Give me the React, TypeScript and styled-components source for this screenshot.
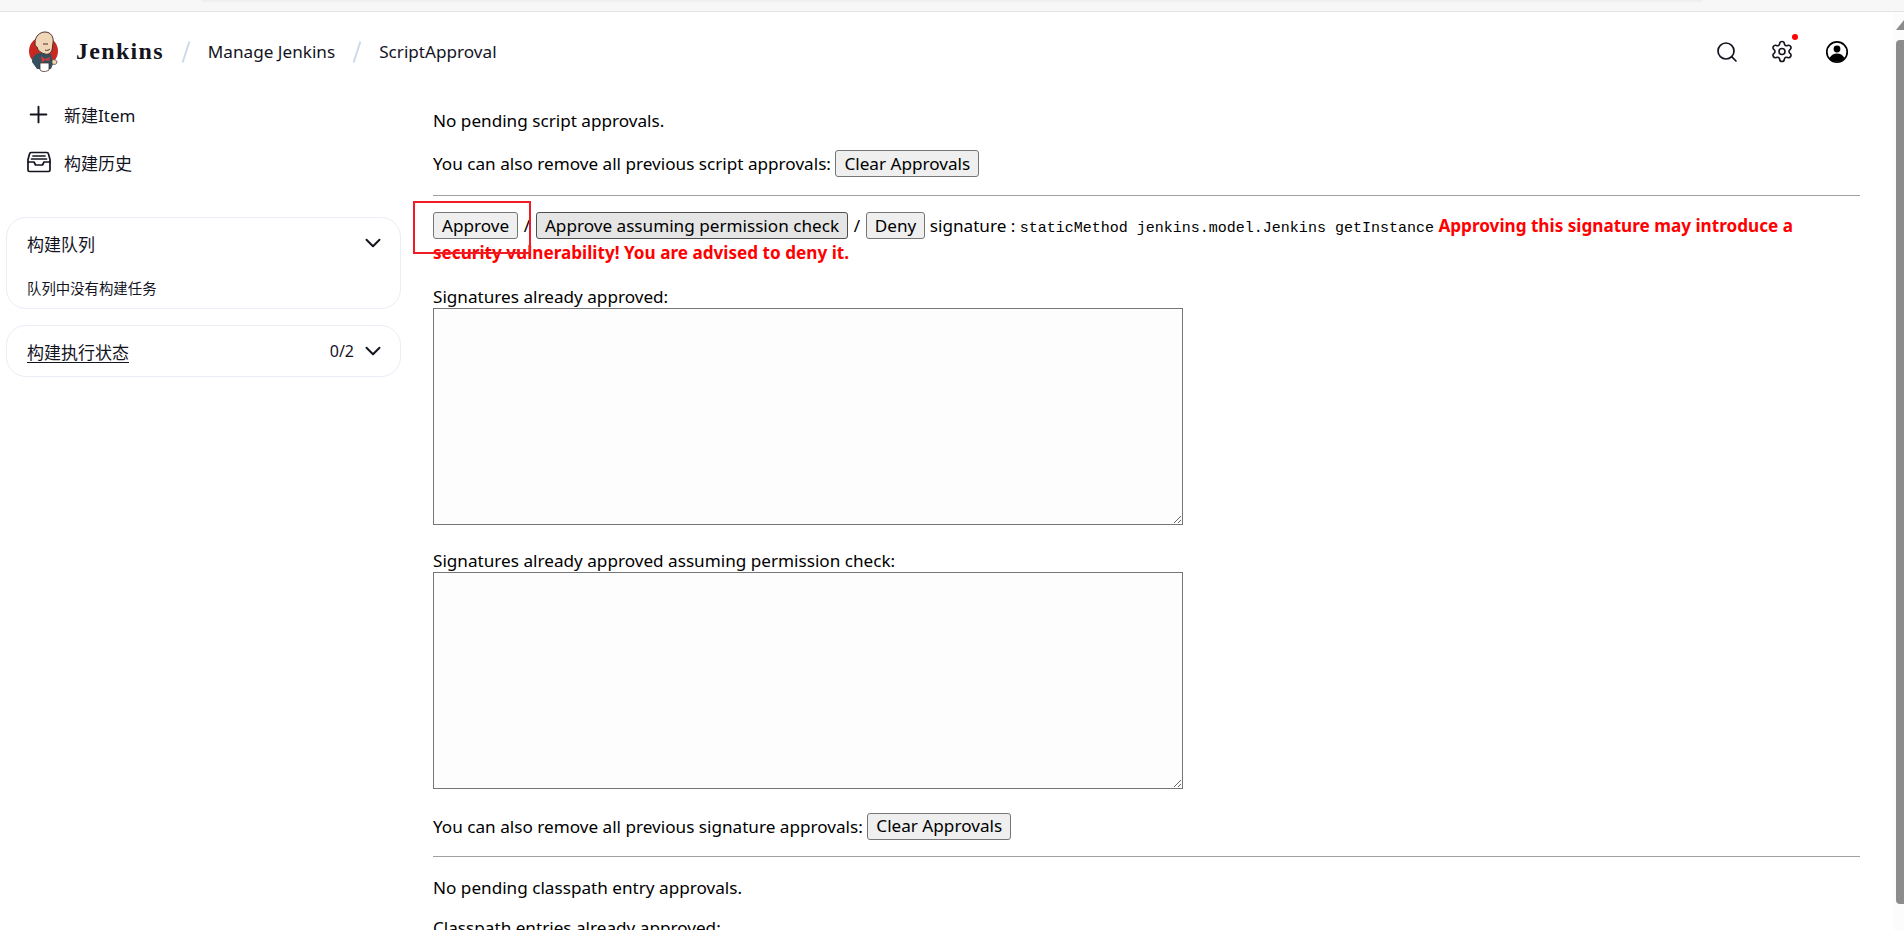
import React from "react"
import styled, { createGlobalStyle } from "styled-components"
import { ChevronDown, Plus, Search, Settings } from "lucide-react"

const GlobalStyle = createGlobalStyle`
  html, body {
    margin: 0;
    height: 930px;
    overflow: hidden;
    background: #fff;
  }
  body {
    font-family: "Noto Sans", "Noto Sans CJK SC", sans-serif;
    font-size: 17.15px;
    color: #000;
  }
`

const Logo = () => (
  <svg width="32" height="42" viewBox="0 0 32 42" aria-hidden="true">
    <circle cx="15.500" cy="20" r="14.500" fill="#c8281f" />
    <path d="M4 31c0-6 4-9 9-9l10 1 2 10-2 5H9z" fill="#335061" />
    <path d="M7 12c0-7 5-11 10-11 6 0 9 5 8 11l-1 7c-1 3-4 5-7 4-4-1-7-3-8-7-1 0-2-2-2-4z" fill="#f0d6b7" stroke="#49312a" strokeWidth="1" />
    <path d="M13 25l4 3 5-2-1 4-4-1-3 3z" fill="#d33833" />
    <path d="M15 13h5M17 19c2 1 4 0 5-1" stroke="#49312a" strokeWidth="1" fill="none" />
    <path d="M12 32h9v7c-3 2-7 2-9 0z" fill="#fff" stroke="#49312a" strokeWidth=".8" />
    <path d="M24 29c2-1 5 0 5 2s-2 3-5 2z" fill="#f0d6b7" stroke="#49312a" strokeWidth=".7" />
  </svg>
)

const UserIcon = () => (
  <svg width="24" height="24" viewBox="0 0 24 24" aria-hidden="true">
    <circle cx="12" cy="12" r="10.200" fill="none" stroke="#000" strokeWidth="1.700" />
    <circle cx="12" cy="9" r="3.400" fill="#000" />
    <path d="M4.500 18c1.800-3 4.400-4.400 7.500-4.400s5.700 1.400 7.500 4.400c-2 2.300-4.600 3.600-7.500 3.600s-5.500-1.300-7.500-3.600z" fill="#000" />
  </svg>
)

const InboxIcon = () => (
  <svg width="24" height="22" viewBox="0 0 24 22" aria-hidden="true" fill="none" stroke="#14141f" strokeWidth="1.700" strokeLinejoin="round" strokeLinecap="round">
    <path d="M1 8.500V19a1.500 1.500 0 0 0 1.500 1.500h19A1.500 1.500 0 0 0 23 19V8.500L21.500 3a1.800 1.800 0 0 0-1.700-1.500H4.200A1.800 1.800 0 0 0 2.500 3z" />
    <path d="M1 11h6l1.500 3h7L17 11h6M6 5h12M4.500 8h15" />
  </svg>
)

const ChromeStrip = styled.div`
  height: 11px;
  background: #f7f7f7;
  border-bottom: 1px solid #e3e3e3;
  display: flex;
  justify-content: center;
`

const AddressBar = styled.div`
  width: 1500px;
  height: 2px;
  background: #efefef;
  border-radius: 0 0 8px 8px;
`

const Shell = styled.div`
  display: flex;
  height: 918px;
  overflow: hidden;
`

const Page = styled.div`
  flex: 1;
  min-width: 0;
  overflow: hidden;
`

const Scrollbar = styled.div`
  width: 10px;
  background: #fcfcfc;
  display: flex;
  flex-direction: column;
  padding: 8px 0 0 2px;
  box-sizing: border-box;
  gap: 10px;
  overflow: hidden;
`

const ScrollArrow = styled.div`
  width: 0;
  height: 0;
  flex-shrink: 0;
  border-left: 8px solid transparent;
  border-bottom: 10px solid #8c8c8c;
`

const ScrollThumb = styled.div`
  width: 14px;
  height: 864px;
  flex-shrink: 0;
  background: #8c8c8c;
  border-radius: 4px;
`

const Header = styled.header`
  height: 79px;
  display: flex;
  align-items: center;
  padding: 0 28px;
  color: #14141f;
`

const Brand = styled.div`
  display: flex;
  align-items: center;
  gap: 16px;
  font-family: "Liberation Serif", "DejaVu Serif", serif;
  font-weight: 700;
  font-size: 24px;
  letter-spacing: 1.3px;
`

const Crumb = styled.span`
  font-size: 17.15px;
  line-height: 24px;
`

const Slash = styled.span`
  width: 2px;
  height: 22px;
  margin: 0 21px;
  background: #cfd9e8;
  transform: rotate(18deg);
`

const HeaderIcons = styled.div`
  margin-left: auto;
  display: flex;
  gap: 31px;
  padding-right: 17px;
`

const IconButton = styled.div`
  position: relative;
  width: 24px;
  height: 24px;
  display: flex;
  align-items: center;
  justify-content: center;
`

const Badge = styled.span`
  position: absolute;
  top: -6px;
  right: -4px;
  width: 6px;
  height: 6px;
  border-radius: 50%;
  background: #f00;
`

const Body = styled.div`
  display: flex;
`

const Side = styled.aside`
  width: 395px;
  margin-left: 6px;
  flex-shrink: 0;
`

const TaskRow = styled.div`
  height: 48px;
  display: flex;
  align-items: center;
  gap: 12px;
  padding-left: 19px;
  font-size: 17px;
  color: #14141f;
`

const TaskIcon = styled.span`
  width: 27px;
  display: flex;
  justify-content: center;
`

const TaskList = styled.div`
  margin: -1px 0 31px;
`

const Card = styled.section`
  border: 1px solid #e9edf5;
  border-radius: 20px;
  padding: 15px 14px 15px 20px;
  margin-bottom: 16px;
  color: #14141f;
`

const CardHead = styled.div`
  display: flex;
  align-items: center;
  justify-content: space-between;
  height: 20px;
  font-size: 17px;
`

const CardTitle = styled.span<{ $link?: boolean }>`
  text-decoration: ${(p) => (p.$link ? "underline" : "none")};
  text-underline-offset: 3px;
`

const CardMeta = styled.span`
  display: flex;
  align-items: center;
  gap: 6px;
  font-size: 16px;
`

const CardNote = styled.p`
  margin: 27px 0 -5px;
  font-size: 14.4px;
  line-height: 18px;
`

const Main = styled.main`
  flex: 1;
  margin-left: 32px;
  margin-right: 34px;
  padding-top: 18px;
  line-height: 24px;
`

const Para = styled.p<{ $gap?: number }>`
  margin: 0 0 ${(p) => p.$gap ?? 16}px;
`

const Rule = styled.hr<{ $before?: number; $after?: number }>`
  border: 0;
  border-top: 1px solid #a0a0a0;
  margin: ${(p) => p.$before ?? 18}px 0 ${(p) => p.$after ?? 17}px;
`

const Btn = styled.button<{ $hover?: boolean }>`
  font: inherit;
  height: 27px;
  padding: 0 8px;
  border-radius: 3px;
  color: #000;
  background: ${(p) => (p.$hover ? "#e5e5e5" : "#efefef")};
  border: 1px solid ${(p) => (p.$hover ? "#4f4f4f" : "#767676")};
`

const Sep = styled.span`
  padding: 0 1.2px;
`

const Highlight = styled.span`
  position: absolute;
  left: -20px;
  top: -11px;
  width: 118px;
  height: 53px;
  box-sizing: border-box;
  border: 2px solid #ee1c25;
  pointer-events: none;
`

const Pending = styled.div`
  position: relative;
  margin-bottom: 20px;
`

const Mono = styled.code`
  font-family: "Liberation Mono", monospace;
  font-size: 15px;
`

const Warning = styled.strong`
  color: #f00;
  font-weight: 700;
`

const Label = styled.div`
  height: 23px;
  line-height: 23px;
`

const ApprovedBox = styled.textarea`
  display: block;
  box-sizing: border-box;
  width: 750px;
  height: 217px;
  margin-bottom: 24px;
  background: #fdfdfd;
  border: 1px solid #767676;
  border-radius: 0;
`

const App = () => (
  <>
    <GlobalStyle />
    <ChromeStrip>
      <AddressBar />
    </ChromeStrip>
    <Shell>
      <Page>
        <Header>
          <Brand>
            <Logo />
            Jenkins
          </Brand>
          <Slash />
          <Crumb>Manage Jenkins</Crumb>
          <Slash />
          <Crumb>ScriptApproval</Crumb>
          <HeaderIcons>
            <IconButton>
              <Search size={24} strokeWidth={1.7} color="#14141f" />
            </IconButton>
            <IconButton>
              <Settings size={25} strokeWidth={1.6} color="#14141f" />
              <Badge />
            </IconButton>
            <IconButton>
              <UserIcon />
            </IconButton>
          </HeaderIcons>
        </Header>
        <Body>
          <Side>
            <TaskList>
              <TaskRow>
                <TaskIcon>
                  <Plus size={27} strokeWidth={1.7} />
                </TaskIcon>
                新建Item
              </TaskRow>
              <TaskRow>
                <TaskIcon>
                  <InboxIcon />
                </TaskIcon>
                构建历史
              </TaskRow>
            </TaskList>
            <Card>
              <CardHead>
                <CardTitle>构建队列</CardTitle>
                <ChevronDown size={26} strokeWidth={1.8} />
              </CardHead>
              <CardNote>队列中没有构建任务</CardNote>
            </Card>
            <Card>
              <CardHead>
                <CardTitle $link>构建执行状态</CardTitle>
                <CardMeta>
                  0/2
                  <ChevronDown size={26} strokeWidth={1.8} />
                </CardMeta>
              </CardHead>
            </Card>
          </Side>
          <Main>
            <Para $gap={17}>No pending script approvals.</Para>
            <Para $gap={0}>
              You can also remove all previous script approvals: <Btn>Clear Approvals</Btn>
            </Para>
            <Rule $after={16} />
            <Pending>
              <Highlight />
              <Btn>Approve</Btn> <Sep>/</Sep> <Btn $hover>Approve assuming permission check</Btn> <Sep>/</Sep> <Btn>Deny</Btn>{" "}
              signature : <Mono>staticMethod jenkins.model.Jenkins getInstance</Mono>{" "}
              <Warning>Approving this signature may introduce a security vulnerability! You are advised to deny it.</Warning>
            </Pending>
            <Label>Signatures already approved:</Label>
            <ApprovedBox readOnly />
            <Label>Signatures already approved assuming permission check:</Label>
            <ApprovedBox readOnly />
            <Para $gap={0}>
              You can also remove all previous signature approvals: <Btn>Clear Approvals</Btn>
            </Para>
            <Rule $before={16} $after={19} />
            <Para $gap={16}>No pending classpath entry approvals.</Para>
            <Para>Classpath entries already approved:</Para>
          </Main>
        </Body>
      </Page>
      <Scrollbar>
        <ScrollArrow />
        <ScrollThumb />
      </Scrollbar>
    </Shell>
  </>
)

export default App
